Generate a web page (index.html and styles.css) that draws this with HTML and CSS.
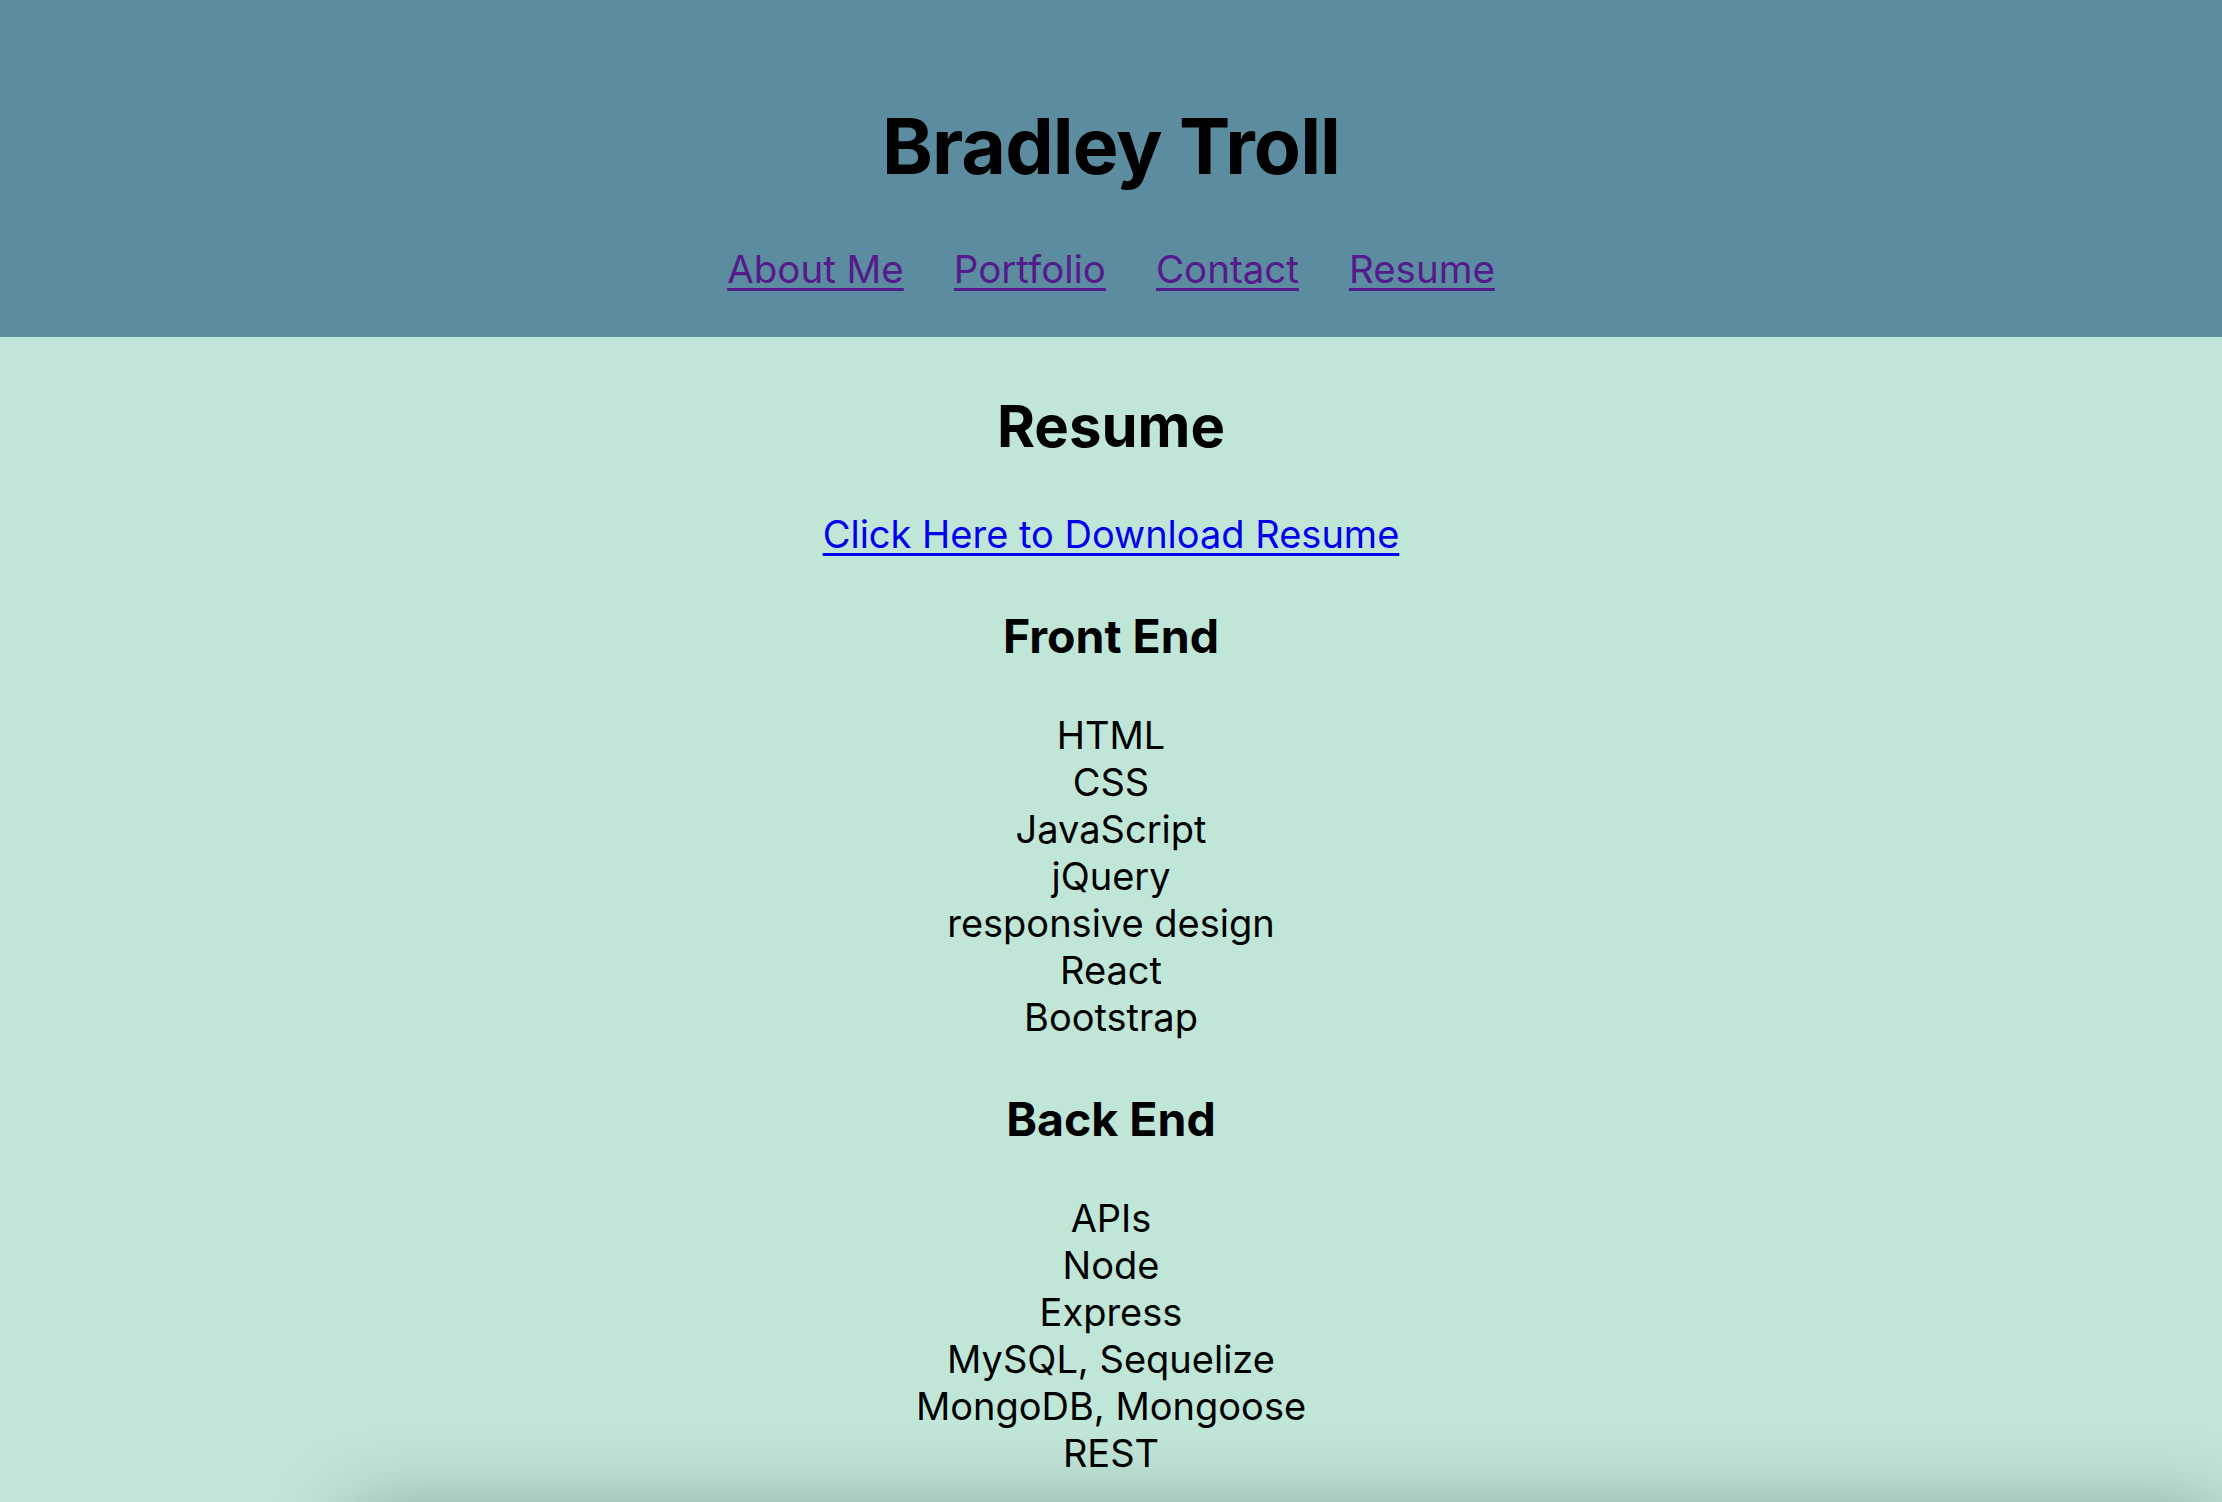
FILE: index.html
```html
<!DOCTYPE html>
<html lang="en">
<head>
<meta charset="utf-8">
<title>Bradley Troll - Resume</title>
<link rel="stylesheet" href="styles.css">
</head>
<body>
<header class="site-header">
  <h1 class="site-title">Bradley Troll</h1>
  <nav class="site-nav">
    <a class="nav-link" href="#about">About Me</a>
    <a class="nav-link" href="#portfolio">Portfolio</a>
    <a class="nav-link" href="#contact">Contact</a>
    <a class="nav-link" href="#resume">Resume</a>
  </nav>
</header>
<main class="resume">
  <h2 class="resume-title">Resume</h2>
  <p class="download"><a class="download-link" href="#download">Click Here to Download Resume</a></p>
  <h3 class="skill-heading">Front End</h3>
  <ul class="skill-list">
    <li>HTML</li>
    <li>CSS</li>
    <li>JavaScript</li>
    <li>jQuery</li>
    <li>responsive design</li>
    <li>React</li>
    <li>Bootstrap</li>
  </ul>
  <h3 class="skill-heading">Back End</h3>
  <ul class="skill-list">
    <li>APIs</li>
    <li>Node</li>
    <li>Express</li>
    <li>MySQL, Sequelize</li>
    <li>MongoDB, Mongoose</li>
    <li>REST</li>
  </ul>
</main>
<footer class="site-footer"></footer>
</body>
</html>
```
FILE: styles.css
```css
html {
  background: #c0e6d8;
}

body {
  margin: 0;
  font-family: Inter, "Liberation Sans", sans-serif;
  color: #000;
  background: #c0e6d8;
  text-align: center;
}

.site-header {
  background: #5b8ca0;
  padding: 99px 0 44px;
}

.site-title {
  margin: 0;
  font-size: 77px;
  line-height: 94px;
  font-weight: 700;
  letter-spacing: -0.9px;
}

.site-nav {
  margin-top: 53px;
  display: flex;
  justify-content: center;
  gap: 50px;
  font-size: 38.5px;
  line-height: 47px;
}

.nav-link {
  color: #551a8b;
  text-decoration: underline;
  text-underline-offset: 5px;
  text-decoration-thickness: 3px;
}

.resume {
  padding-top: 54px;
  padding-bottom: 34px;
}

.resume-title {
  margin: 0 0 50px;
  font-size: 58px;
  line-height: 70px;
  font-weight: 700;
}

.download {
  margin: 0 0 50px;
  font-size: 38px;
  line-height: 47px;
}

.download-link {
  color: #0000ee;
  text-decoration: underline;
  text-underline-offset: 5px;
  text-decoration-thickness: 3px;
}

.skill-heading {
  margin: 0 0 48px;
  font-size: 46.5px;
  line-height: 56px;
  font-weight: 700;
}

.skill-list {
  margin: 0 0 50px;
  padding: 0;
  list-style: none;
  font-size: 38px;
  line-height: 47px;
}

.skill-list:last-child {
  margin-bottom: 0;
}

.site-footer {
  margin-left: 350px;
  height: 200px;
  background: #c0e6d8;
  box-shadow: 0 0 80px rgba(0, 0, 0, 0.3);
}
```
